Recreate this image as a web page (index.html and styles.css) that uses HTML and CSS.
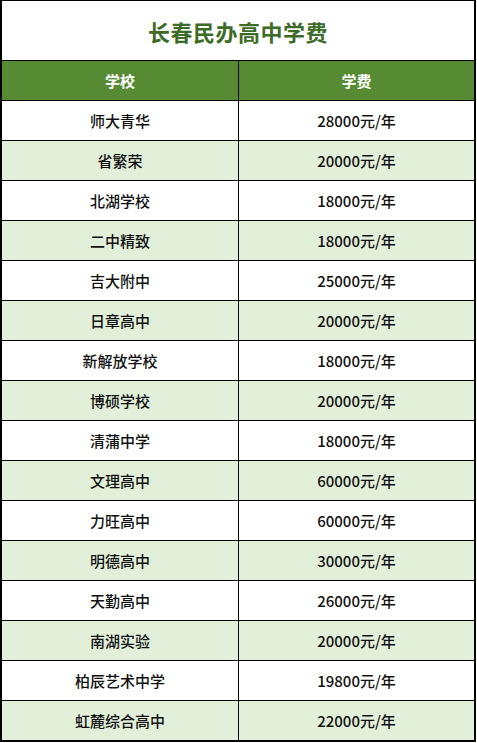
FILE: index.html
```html
<!DOCTYPE html>
<html lang="zh">
<head>
<meta charset="utf-8">
<title>长春民办高中学费</title>
<link rel="stylesheet" href="styles.css">
</head>
<body>
<div class="sheet">
  <div class="title">长春民办高中学费</div>
  <div class="row head"><div class="cell">学校</div><div class="cell">学费</div></div>
  <div class="row"><div class="cell">师大青华</div><div class="cell">28000元/年</div></div>
  <div class="row alt"><div class="cell">省繁荣</div><div class="cell">20000元/年</div></div>
  <div class="row"><div class="cell">北湖学校</div><div class="cell">18000元/年</div></div>
  <div class="row alt"><div class="cell">二中精致</div><div class="cell">18000元/年</div></div>
  <div class="row"><div class="cell">吉大附中</div><div class="cell">25000元/年</div></div>
  <div class="row alt"><div class="cell">日章高中</div><div class="cell">20000元/年</div></div>
  <div class="row"><div class="cell">新解放学校</div><div class="cell">18000元/年</div></div>
  <div class="row alt"><div class="cell">博硕学校</div><div class="cell">20000元/年</div></div>
  <div class="row"><div class="cell">清蒲中学</div><div class="cell">18000元/年</div></div>
  <div class="row alt"><div class="cell">文理高中</div><div class="cell">60000元/年</div></div>
  <div class="row"><div class="cell">力旺高中</div><div class="cell">60000元/年</div></div>
  <div class="row alt"><div class="cell">明德高中</div><div class="cell">30000元/年</div></div>
  <div class="row"><div class="cell">天勤高中</div><div class="cell">26000元/年</div></div>
  <div class="row alt"><div class="cell">南湖实验</div><div class="cell">20000元/年</div></div>
  <div class="row"><div class="cell">柏辰艺术中学</div><div class="cell">19800元/年</div></div>
  <div class="row alt last"><div class="cell">虹麓综合高中</div><div class="cell">22000元/年</div></div>
</div>
</body>
</html>
```

FILE: styles.css
```css
* { box-sizing: border-box; }
html, body { margin: 0; padding: 0; background: #ffffff; }
body {
  font-family: "Noto Sans CJK SC", "Noto Sans", sans-serif;
  color: #111111;
}
.sheet {
  width: 476px;
  border-top: 1px solid #000;
  border-left: 2px solid #000;
  border-right: 2px solid #000;
  border-bottom: 2px solid #000;
}
.title {
  height: 60px;
  border-bottom: 1px solid #000;
  display: flex;
  align-items: center;
  justify-content: center;
  font-size: 22px;
  font-weight: 700;
  color: #3d6b28;
  letter-spacing: 0.5px;
}
.row {
  display: grid;
  grid-template-columns: 237px 235px;
  height: 40px;
  border-bottom: 1px solid #000;
}
.row.last { height: 39px; border-bottom: none; }
.cell {
  display: flex;
  align-items: center;
  justify-content: center;
  font-size: 15px;
  font-weight: 500;
}
.cell:first-child { border-right: 1px solid #000; }
.row.alt { background: #e2efd9; }
.row.head { background: #568b33; }
.row.head .cell { color: #ffffff; font-weight: 700; font-size: 15px; }
```
